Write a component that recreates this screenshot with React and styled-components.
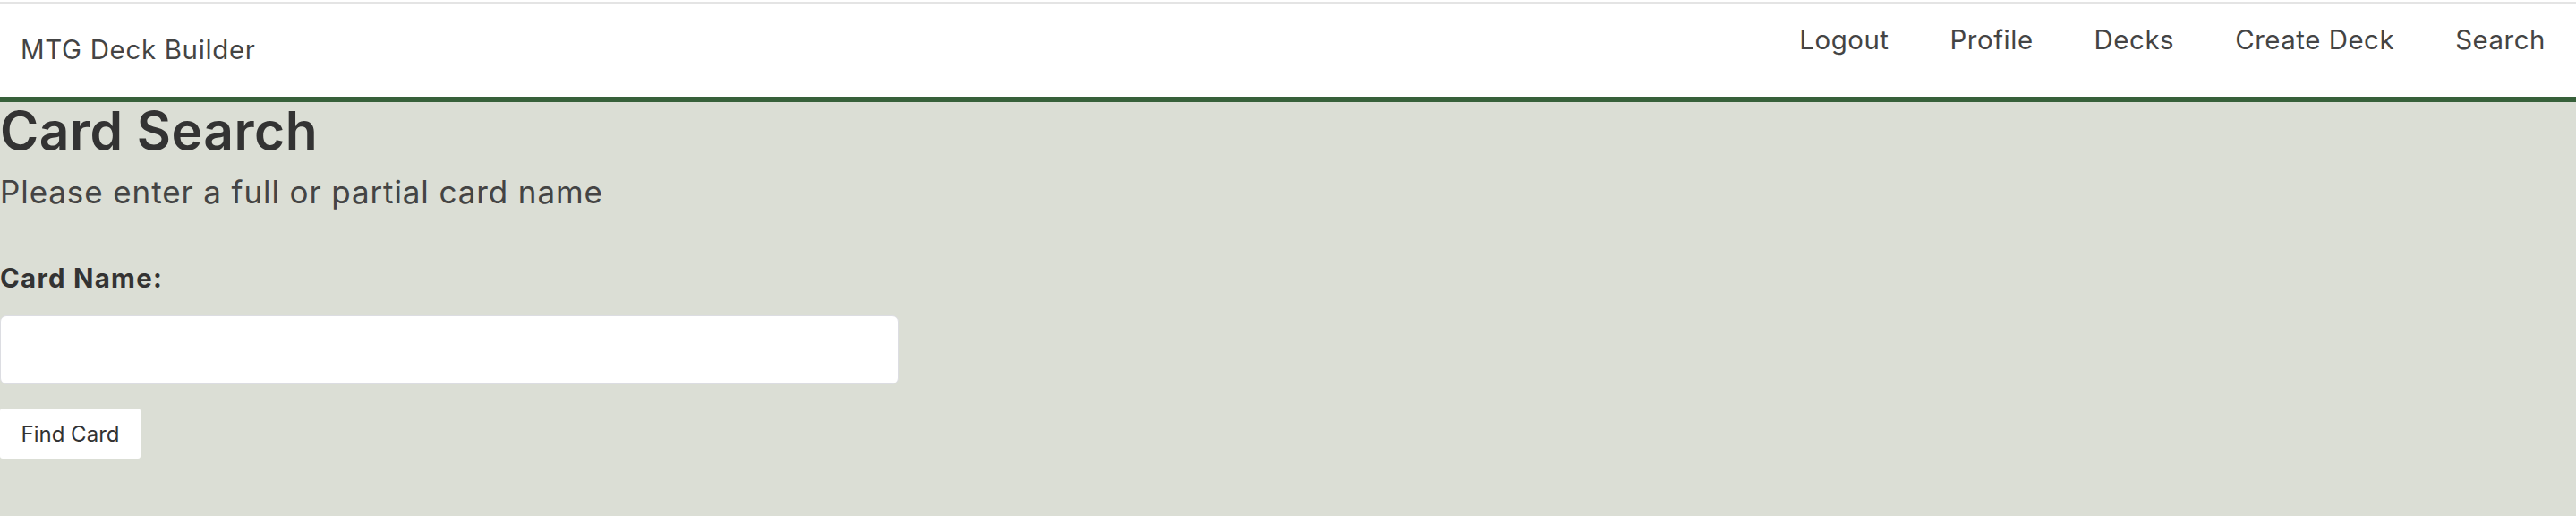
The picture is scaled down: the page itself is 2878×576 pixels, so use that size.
import React from "react"
import styled, { createGlobalStyle } from "styled-components"

const GlobalStyle = createGlobalStyle`
  html, body {
    margin: 0;
    padding: 0;
    background: #dbded5;
    font-family: Inter, "Noto Sans", "Liberation Sans", sans-serif;
  }
  * {
    box-sizing: border-box;
  }
`

const Header = styled.header`
  background: #fff;
  padding-top: 2px;
  border-bottom: 6px solid #37603a;
`

const TopRule = styled.div`
  height: 2px;
  background: #e4e4e4;
`

const NavBar = styled.nav`
  display: flex;
  align-items: flex-start;
  justify-content: space-between;
  height: 104px;
`

const Brand = styled.a`
  padding: 30px 0 0 23px;
  font-size: 29.4px;
  line-height: 1.5;
  letter-spacing: 0.7px;
  color: #444;
  text-decoration: none;
`

const NavList = styled.ul`
  display: flex;
  list-style: none;
  margin: 0;
  padding: 19px 0 0;
`

const NavLink = styled.a`
  display: block;
  padding: 0 34px;
  font-size: 29.4px;
  line-height: 1.5;
  letter-spacing: 0.55px;
  color: #444;
  text-decoration: none;
`

const Main = styled.main`
  padding-bottom: 60px;
`

const Title = styled.h1`
  margin: 0;
  font-size: 58.7px;
  font-weight: 600;
  line-height: 1.1;
  letter-spacing: 0.5px;
  color: #333;
`

const Subtitle = styled.p`
  margin: 10px 0 0;
  font-size: 35px;
  line-height: 1.45;
  letter-spacing: 0.9px;
  color: #444;
`

const Form = styled.form`
  display: flex;
  flex-direction: column;
  align-items: flex-start;
  margin-top: 50px;
`

const Label = styled.label`
  font-size: 29.4px;
  font-weight: 700;
  line-height: 1.5;
  letter-spacing: 1.3px;
  color: #333;
`

const Input = styled.input`
  margin-top: 19px;
  width: 1004px;
  height: 77px;
  padding: 0 22px;
  border: 1px solid #dcdde2;
  border-radius: 7px;
  background: #fff;
  font-family: inherit;
  font-size: 29.4px;
  color: #333;
  outline: none;
`

const Button = styled.button`
  margin-top: 27px;
  width: 157px;
  height: 56px;
  padding: 0;
  border: none;
  border-radius: 3px;
  background: #fff;
  font-family: inherit;
  font-size: 24px;
  color: #333;
  cursor: pointer;
`

const links = ["Logout", "Profile", "Decks", "Create Deck", "Search"]

const App = () => {
  return (
    <>
      <GlobalStyle />
      <Header>
        <TopRule />
        <NavBar>
          <Brand href="#">MTG Deck Builder</Brand>
          <NavList>
            {links.map(link => (
              <li key={link}>
                <NavLink href="#">{link}</NavLink>
              </li>
            ))}
          </NavList>
        </NavBar>
      </Header>
      <Main>
        <Title>Card Search</Title>
        <Subtitle>Please enter a full or partial card name</Subtitle>
        <Form onSubmit={e => e.preventDefault()}>
          <Label htmlFor="cardName">Card Name:</Label>
          <Input id="cardName" type="text" />
          <Button type="submit">Find Card</Button>
        </Form>
      </Main>
    </>
  )
}

export default App
